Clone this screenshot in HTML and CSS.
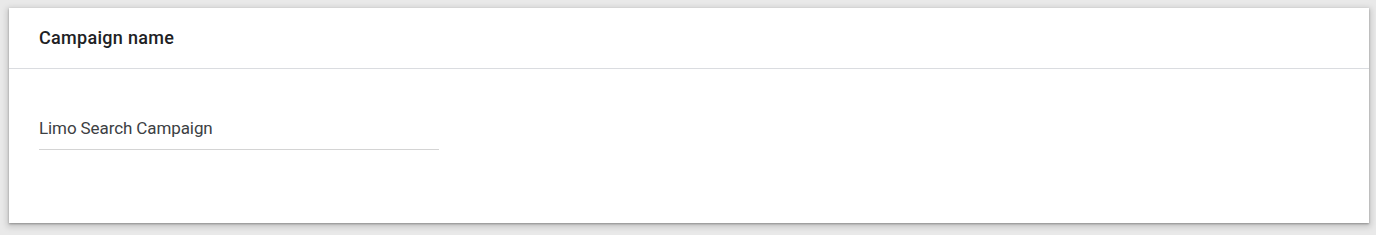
FILE: index.html
```html
<!DOCTYPE html>
<html lang="en">
<head>
  <meta charset="UTF-8" />
  <title>Campaign name</title>
  <link rel="stylesheet" href="styles.css">
</head>
<body>
  <div class="card">
    <div class="card-header">
      <h2>Campaign name</h2>
    </div>
    <div class="card-body">
      <div class="text-field">
        <input type="text" value="Limo Search Campaign" />
      </div>
    </div>
  </div>
</body>
</html>
```

FILE: styles.css
```css
body {
  font-family: Roboto, Arial, sans-serif;
  background-color: #e9e9e9;
  margin: 0;
  padding: 8px 7px 12px 9px;
}

.card {
  background-color: white;
  height: 215px;
  box-shadow: 0 1px 2px rgba(0,0,0,0.3), 0 2px 6px 2px rgba(0,0,0,0.15);
}

.card-header {
  height: 61px;
  box-sizing: border-box;
  display: flex;
  align-items: center;
  padding: 0 30px 2px;
  border-bottom: 1px solid #dadce0;
}

.card-header h2 {
  margin: 0;
  font-size: 18px;
  font-weight: 500;
  letter-spacing: 0.3px;
  color: #202124;
}

.card-body {
  padding: 49px 30px 0;
}

.text-field {
  width: 400px;
  border-bottom: 1px solid #d4d4d4;
}

.text-field input {
  display: block;
  width: 100%;
  box-sizing: border-box;
  border: none;
  outline: none;
  padding: 0 0 11px;
  margin: 0;
  font-family: Roboto, Arial, sans-serif;
  font-size: 17px;
  letter-spacing: -0.1px;
  line-height: 20px;
  height: 31px;
  color: #3c4043;
  background: transparent;
}
```
